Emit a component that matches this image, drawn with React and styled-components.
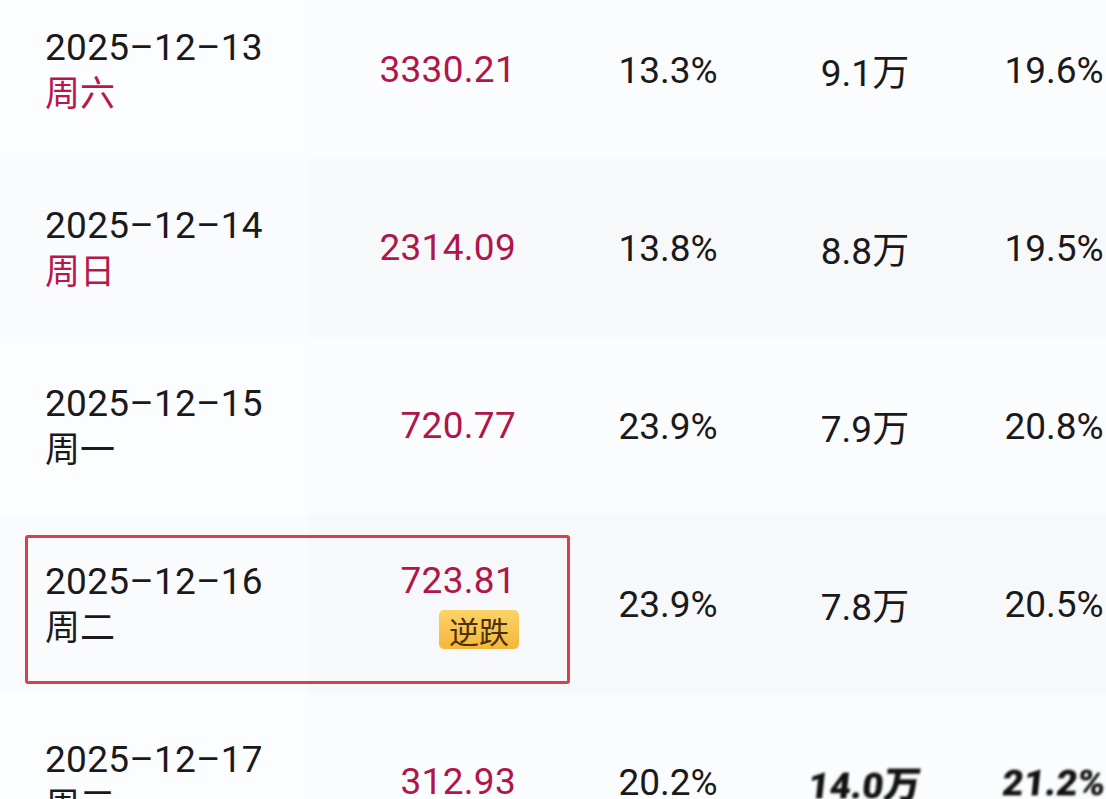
import React from 'react';
import styled, { createGlobalStyle } from 'styled-components';

const GlobalStyle = createGlobalStyle`
  html, body {
    margin: 0;
    padding: 0;
    background: #f9fafb;
    overflow: hidden;
  }
  body {
    font-family: Roboto, "Noto Sans CJK SC", sans-serif;
    color: #1a1a1c;
  }
`;

const Page = styled.div`
  width: 1106px;
  height: 799px;
  overflow: hidden;
`;

const Table = styled.div`
  margin-top: -19px;
  display: flex;
  flex-direction: column;
`;

const Row = styled.div`
  position: relative;
  height: 178px;
  display: grid;
  grid-template-columns: 308px 262px 196px 198px 180px;
  background: ${p => (p.$shaded ? '#f7f8fa' : '#fbfcfd')};
`;

const DateCell = styled.div`
  display: flex;
  flex-direction: column;
  justify-content: center;
  padding-left: 45px;
  padding-top: 2px;
  background: rgba(255, 255, 255, 0.4);
`;

const DateText = styled.div`
  font-size: 37px;
  line-height: 47px;
  letter-spacing: 0.3px;
`;

const Weekday = styled.div`
  font-size: 35px;
  line-height: 47px;
  color: ${p => (p.$weekend ? '#b8174d' : '#1a1a1c')};
`;

const PriceCell = styled.div`
  display: flex;
  flex-direction: column;
  align-items: flex-end;
  justify-content: center;
  gap: 7px;
  padding-right: 54px;
`;

const Price = styled.div`
  font-size: 37px;
  line-height: 44px;
  color: #b0164a;
  letter-spacing: 0.3px;
`;

const Badge = styled.span`
  display: inline-flex;
  align-items: center;
  justify-content: center;
  height: 39px;
  padding: 0 10px;
  margin-right: -3px;
  border-radius: 5px;
  background: linear-gradient(180deg, #fbd366 0%, #f4b73a 100%);
  color: #4b2f0e;
  font-size: 30px;
`;

const Cell = styled.div`
  display: flex;
  align-items: center;
  justify-content: center;
  font-size: 37px;
  white-space: nowrap;
  ${p =>
    p.$smudged &&
    `
    font-weight: 900;
    color: #111;
    filter: blur(1.2px);
    transform: skewX(-6deg);
  `}
`;

const Highlight = styled.div`
  position: absolute;
  left: 25px;
  top: 20px;
  width: 545px;
  height: 149px;
  box-sizing: border-box;
  border: 3px solid #d2434c;
  border-radius: 3px;
  pointer-events: none;
`;

const rows = [
  { date: '2025–12–13', day: '周六', weekend: true, price: '3330.21', a: '13.3%', b: '9.1万', c: '19.6%' },
  { date: '2025–12–14', day: '周日', weekend: true, price: '2314.09', a: '13.8%', b: '8.8万', c: '19.5%' },
  { date: '2025–12–15', day: '周一', price: '720.77', a: '23.9%', b: '7.9万', c: '20.8%' },
  { date: '2025–12–16', day: '周二', price: '723.81', badge: '逆跌', highlight: true, a: '23.9%', b: '7.8万', c: '20.5%' },
  { date: '2025–12–17', day: '周三', price: '312.93', a: '20.2%', b: '14.0万', c: '21.2%', smudged: true },
];

export default function App() {
  return (
    <>
      <GlobalStyle />
      <Page>
        <Table>
          {rows.map((r, i) => (
            <Row key={r.date} $shaded={i % 2 === 1}>
              <DateCell>
                <DateText>{r.date}</DateText>
                <Weekday $weekend={r.weekend}>{r.day}</Weekday>
              </DateCell>
              <PriceCell>
                <Price>{r.price}</Price>
                {r.badge && <Badge>{r.badge}</Badge>}
              </PriceCell>
              <Cell>{r.a}</Cell>
              <Cell $smudged={r.smudged}>{r.b}</Cell>
              <Cell $smudged={r.smudged}>{r.c}</Cell>
              {r.highlight && <Highlight />}
            </Row>
          ))}
        </Table>
      </Page>
    </>
  );
}
